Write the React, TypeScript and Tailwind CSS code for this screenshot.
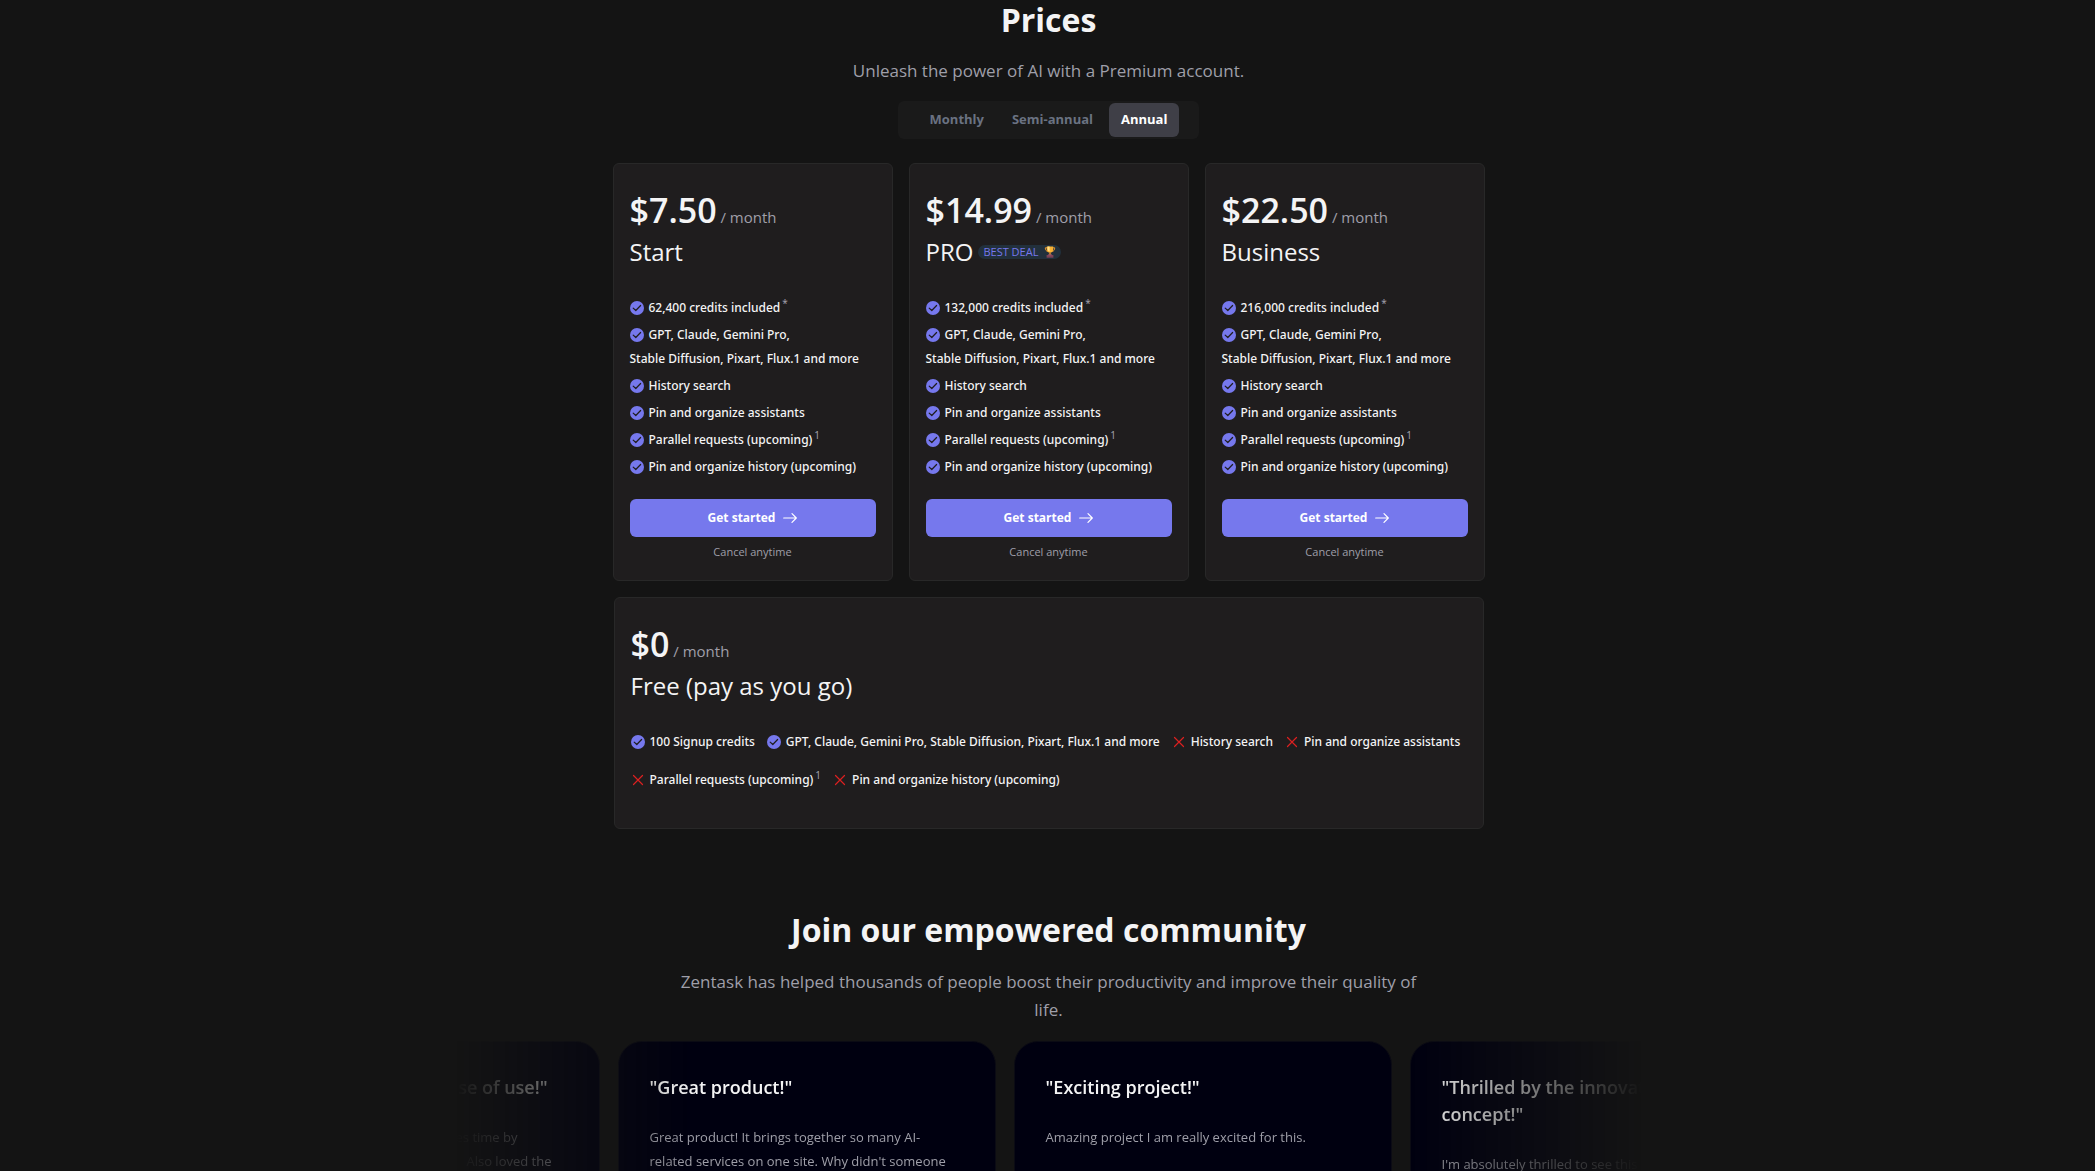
import { useState } from "react";
import type { ReactNode } from "react";

const PERIODS = ["Monthly", "Semi-annual", "Annual"];

const PLANS = [
  { name: "Start", price: "$7.50", credits: "62,400", best: false },
  { name: "PRO", price: "$14.99", credits: "132,000", best: true },
  { name: "Business", price: "$22.50", credits: "216,000", best: false },
];

const FREE_FEATURES = [
  { text: "100 Signup credits", included: true },
  {
    text: "GPT, Claude, Gemini Pro, Stable Diffusion, Pixart, Flux.1 and more",
    included: true,
  },
  { text: "History search", included: false },
  { text: "Pin and organize assistants", included: false },
  { text: "Parallel requests (upcoming)", included: false, note: "1" },
  { text: "Pin and organize history (upcoming)", included: false },
];

function CheckIcon() {
  return (
    <svg className="size-3.5 shrink-0" viewBox="0 0 14 14" aria-hidden="true">
      <circle cx="7" cy="7" r="7" fill="#7678ed" />
      <path
        d="M3.2 7.1 5.8 9.5 10.6 4.5"
        fill="none"
        stroke="#1f1d1e"
        strokeWidth="1.2"
        strokeLinecap="round"
        strokeLinejoin="round"
      />
    </svg>
  );
}

function CrossIcon() {
  return (
    <svg className="size-3.5 shrink-0" viewBox="0 0 14 14" aria-hidden="true">
      <path
        d="M2.5 2.5l9 9M11.5 2.5l-9 9"
        fill="none"
        stroke="#dc2020"
        strokeWidth="1.2"
        strokeLinecap="round"
      />
    </svg>
  );
}

function ArrowIcon() {
  return (
    <svg className="size-3.5" viewBox="0 0 14 14" aria-hidden="true">
      <path
        d="M.7 7h12.4M9 2.6 13.3 7 9 11.4"
        fill="none"
        stroke="#fff"
        strokeWidth="1.2"
        strokeLinecap="round"
        strokeLinejoin="round"
      />
    </svg>
  );
}

function TrophyIcon() {
  return (
    <svg className="size-3" viewBox="0 0 12 12" aria-hidden="true">
      <path
        d="M3 1.8H1.3c0 2.2.9 3.3 2.5 3.6M9 1.8h1.7c0 2.2-.9 3.3-2.5 3.6"
        fill="none"
        stroke="#e8962e"
        strokeWidth="1"
      />
      <path d="M2.8.6h6.4v2.6c0 2.2-1.3 3.4-3.2 3.4S2.8 5.4 2.8 3.2z" fill="#f9b233" />
      <path d="M3.6.6h2v4.9c-1.3-.5-2-1.3-2-2.6z" fill="#ffe08a" />
      <path d="M5.3 6.3h1.4v2.3H5.3z" fill="#e8962e" />
      <path d="M2.6 9h6.8v2.7H2.6z" fill="#7d4256" />
      <path d="M4.3 8.3h3.4v1H4.3z" fill="#b5606a" />
    </svg>
  );
}

function Feature({
  included = true,
  note,
  children,
}: {
  included?: boolean;
  note?: string;
  children: ReactNode;
}) {
  return (
    <li className="flex items-center gap-[5px]">
      {included ? <CheckIcon /> : <CrossIcon />}
      <span>
        {children}
        {note && <sup className="ml-0.5 text-[10px] font-normal text-zinc-400">{note}</sup>}
      </span>
    </li>
  );
}

function Price({ value }: { value: string }) {
  return (
    <p className="text-[34px] leading-10 font-semibold">
      {value}
      <span className="text-[15px] leading-none font-normal text-zinc-400"> / month</span>
    </p>
  );
}

function PlanCard({ plan }: { plan: (typeof PLANS)[number] }) {
  return (
    <article className="rounded-md border border-[#282828] bg-[#1f1d1e] px-4 pt-[26px] pb-[18px]">
      <Price value={plan.price} />
      <h3 className="mt-1.5 flex items-center gap-[5px] text-2xl leading-8">
        {plan.name}
        {plan.best && (
          <span className="flex h-3.5 items-center gap-1.5 rounded-full bg-[#22303c] px-[5px] text-[11px] leading-3.5 text-[#7678ed]">
            BEST DEAL <TrophyIcon />
          </span>
        )}
      </h3>
      <ul className="mt-7 flex flex-col gap-[3px] font-['Noto_Sans',sans-serif] text-xs leading-6 font-medium whitespace-nowrap">
        <Feature note="*">{plan.credits} credits included</Feature>
        <li>
          <div className="flex items-center gap-[5px]">
            <CheckIcon />
            GPT, Claude, Gemini Pro,
          </div>
          <div>Stable Diffusion, Pixart, Flux.1 and more</div>
        </li>
        <Feature>History search</Feature>
        <Feature>Pin and organize assistants</Feature>
        <Feature note="1">Parallel requests (upcoming)</Feature>
        <Feature>Pin and organize history (upcoming)</Feature>
      </ul>
      <button
        type="button"
        className="mt-5 flex h-[38px] w-full items-center justify-center gap-2 rounded-md bg-[#7678ed] text-xs font-bold text-white"
      >
        Get started <ArrowIcon />
      </button>
      <p className="mt-[5px] text-center text-[11px] leading-5 text-zinc-400">Cancel anytime</p>
    </article>
  );
}

function Testimonial({ title, children }: { title: ReactNode; children: ReactNode }) {
  return (
    <article className="h-80 w-[378px] shrink-0 rounded-3xl border border-[#0b0b14] bg-[#000010] px-[31px] py-8">
      <h3 className="text-lg leading-[27px] font-semibold">{title}</h3>
      <div className="mt-6 text-[13px] leading-6 text-zinc-400">{children}</div>
    </article>
  );
}

export default function App() {
  const [period, setPeriod] = useState("Annual");

  return (
    <main className="h-screen overflow-hidden bg-[#141414] pl-0.5 font-['Open_Sans',sans-serif] text-zinc-100">
      <section className="mx-auto flex max-w-[872px] flex-col">
        <h2 className="text-center text-[32px] leading-10 font-bold">Prices</h2>
        <p className="mt-[17px] text-center text-[17px] leading-7 text-zinc-400">
          Unleash the power of AI with a Premium account.
        </p>

        <div className="mx-auto mt-4 flex gap-1 rounded-md bg-[#1a1a1a] px-5 py-0.5">
          {PERIODS.map((p) => (
            <button
              key={p}
              type="button"
              aria-pressed={p === period}
              onClick={() => setPeriod(p)}
              className={
                p === period
                  ? "h-[34px] rounded-md bg-zinc-700 px-3 text-[13px] font-bold text-white"
                  : "h-[34px] rounded-md px-3 text-[13px] font-bold text-gray-500"
              }
            >
              {p}
            </button>
          ))}
        </div>

        <div className="mt-6 grid grid-cols-3 gap-4">
          {PLANS.map((plan) => (
            <PlanCard key={plan.name} plan={plan} />
          ))}
        </div>

        <article className="mx-px mt-4 rounded-md border border-[#282828] bg-[#1f1d1e] px-4 pt-[26px] pb-9">
          <Price value="$0" />
          <h3 className="mt-1.5 text-2xl leading-8">Free (pay as you go)</h3>
          <ul className="mt-7 flex flex-wrap gap-x-3 gap-y-3.5 font-['Noto_Sans',sans-serif] text-xs leading-6 font-medium">
            {FREE_FEATURES.map((f) => (
              <Feature key={f.text} included={f.included} note={f.note}>
                {f.text}
              </Feature>
            ))}
          </ul>
        </article>
      </section>

      <section className="mt-[81px]">
        <h2 className="text-center text-[32px] leading-10 font-bold">
          Join our empowered community
        </h2>
        <p className="mx-auto mt-[18px] max-w-[740px] text-center text-[17px] leading-7 text-zinc-400">
          Zentask has helped thousands of people boost their productivity and improve their quality
          of life.
        </p>

        {/* Testimonial strip, faded out on both sides */}
        <div className="mx-auto mt-[17px] max-w-[1184px] overflow-hidden [mask-image:linear-gradient(to_right,transparent,black_20%,black_80%,transparent)]">
          <div className="-ml-[235px] flex gap-[18px]">
            <Testimonial title={<span className="block pr-5 text-right">ease of use!"</span>}>
              <span className="block pr-[50px] text-right">saves time by</span>
              <span className="block pr-4 text-right">Also loved the</span>
            </Testimonial>
            <Testimonial title={'"Great product!"'}>
              Great product! It brings together so many AI-
              <br />
              related services on one site. Why didn't someone
            </Testimonial>
            <Testimonial title={'"Exciting project!"'}>
              Amazing project I am really excited for this.
            </Testimonial>
            <Testimonial title={'"Thrilled by the innovative concept!"'}>
              I'm absolutely thrilled to see this
            </Testimonial>
          </div>
        </div>
      </section>
    </main>
  );
}
